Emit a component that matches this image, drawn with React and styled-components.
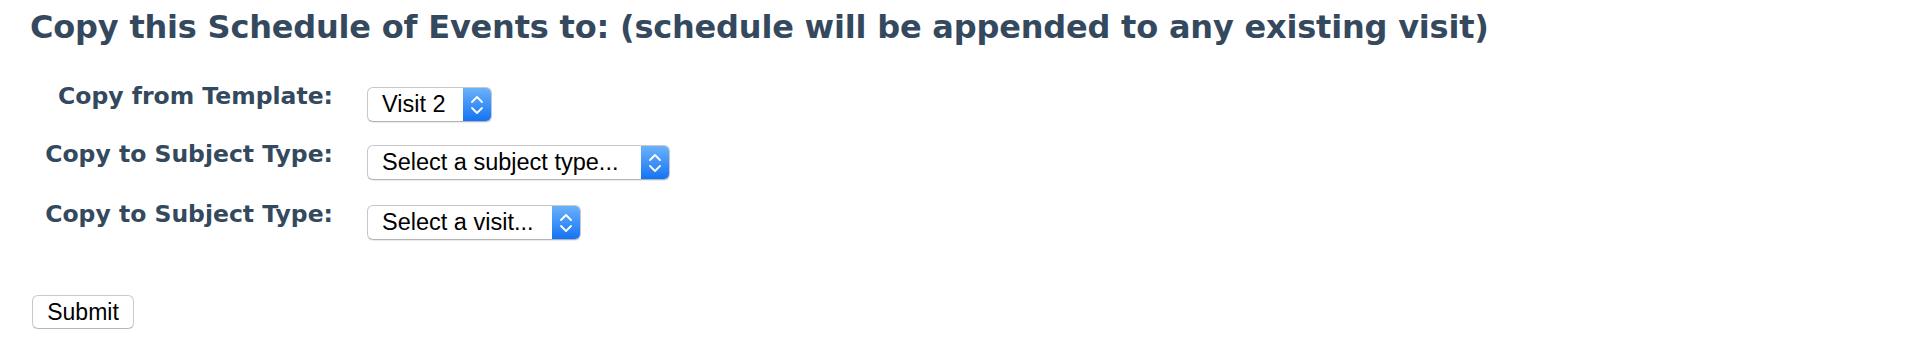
import React from "react"
import styled, { createGlobalStyle } from "styled-components"

const GlobalStyle = createGlobalStyle`
  html, body {
    margin: 0;
    padding: 0;
    background: #ffffff;
  }
`

const Page = styled.div`
  padding: 7px 30px 0 30px;
  font-family: "DejaVu Sans", Verdana, sans-serif;
  color: #34495e;
`

const Heading = styled.h2`
  margin: 0 0 40px 0;
  font-size: 32px;
  font-weight: bold;
  line-height: 40px;
  letter-spacing: -0.2px;
`

const FormGrid = styled.div`
  display: grid;
  grid-template-columns: 303px auto;
  column-gap: 34px;
  align-items: start;
  justify-items: start;
`

const Label = styled.label`
  justify-self: end;
  margin-top: ${(p) => p.gap - 4}px;
  font-size: 23.5px;
  font-weight: bold;
  line-height: 26px;
  white-space: nowrap;
`

const SelectBox = styled.div`
  display: flex;
  align-items: stretch;
  margin-top: ${(p) => p.gap}px;
  height: 35px;
  width: ${(p) => p.width}px;
  box-sizing: border-box;
  border: 1px solid #c8c8c8;
  border-bottom-color: #b4b4b4;
  border-radius: 6px;
  background: #ffffff;
  box-shadow: 0 1px 1px rgba(0, 0, 0, 0.08);
  overflow: hidden;
  font-family: "Liberation Sans", Arial, sans-serif;
  color: #000;
`

const SelectText = styled.span`
  flex: 1;
  display: flex;
  align-items: center;
  padding-left: 14px;
  font-size: 23.5px;
  white-space: nowrap;
`

const Stepper = styled.span`
  width: 28px;
  display: flex;
  align-items: center;
  justify-content: center;
  background: linear-gradient(#6bb1fb, #1473f4);
`

const Chevrons = () => (
  <svg width="16" height="26" viewBox="0 0 16 26" fill="none">
    <path
      d="M3 10 L8 5 L13 10"
      stroke="#fff"
      strokeWidth="1.8"
      strokeLinecap="round"
      strokeLinejoin="round"
    />
    <path
      d="M3 16 L8 21 L13 16"
      stroke="#fff"
      strokeWidth="1.8"
      strokeLinecap="round"
      strokeLinejoin="round"
    />
  </svg>
)

const Select = ({ value, width, gap }) => (
  <SelectBox width={width} gap={gap}>
    <SelectText>{value}</SelectText>
    <Stepper>
      <Chevrons />
    </Stepper>
  </SelectBox>
)

const SubmitButton = styled.button`
  margin-top: 55px;
  margin-left: 2px;
  height: 34px;
  width: 102px;
  border: 1px solid #c9c9c9;
  border-bottom-color: #b6b6b6;
  border-radius: 6px;
  background: #ffffff;
  box-shadow: 0 1px 1px rgba(0, 0, 0, 0.06);
  font-family: "Liberation Sans", Arial, sans-serif;
  font-size: 23px;
  color: #000;
  padding: 0;
`

const rows = [
  { label: "Copy from Template:", value: "Visit 2", width: 125, gap: 0 },
  { label: "Copy to Subject Type:", value: "Select a subject type...", width: 303, gap: 23 },
  { label: "Copy to Subject Type:", value: "Select a visit...", width: 214, gap: 25 },
]

const App = () => {
  return (
    <>
      <GlobalStyle />
      <Page>
        <Heading>
          Copy this Schedule of Events to: (schedule will be appended to any
          existing visit)
        </Heading>
        <FormGrid>
          {rows.map((row, i) => (
            <React.Fragment key={i}>
              <Label gap={row.gap}>{row.label}</Label>
              <Select value={row.value} width={row.width} gap={row.gap} />
            </React.Fragment>
          ))}
        </FormGrid>
        <SubmitButton>Submit</SubmitButton>
      </Page>
    </>
  )
}

export default App
